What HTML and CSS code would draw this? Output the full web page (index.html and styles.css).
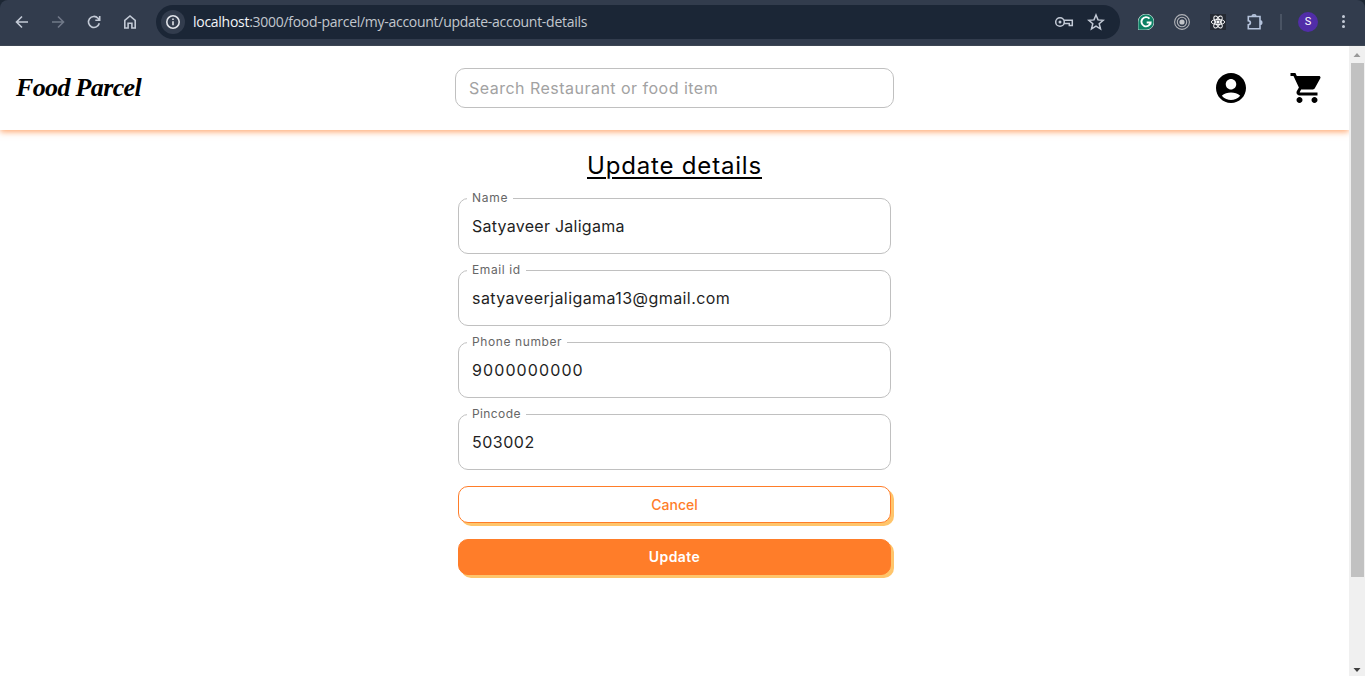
FILE: index.html
```html
<!DOCTYPE html>
<html lang="en">
<head>
<meta charset="utf-8">
<title>Food Parcel</title>
<link rel="stylesheet" href="styles.css">
</head>
<body>
<div class="browser">
  <div class="toolbar">
    <nav class="nav">
      <svg class="i16" viewBox="0 0 16 16"><path d="M14 8H3M8 2.5 2.5 8 8 13.500"/></svg>
      <svg class="i16 dim" viewBox="0 0 16 16"><path d="M2 8h11M8 2.500 13.500 8 8 13.500"/></svg>
      <svg class="i16" viewBox="0 0 16 16"><path d="M13.300 9.200A5.500 5.500 0 1 1 12 4.200L13.600 6M13.700 2v4.300H9.300"/></svg>
      <svg class="i16" viewBox="0 0 16 16"><path d="M2.800 6.300 8 2l5.200 4.300V14H9.900V9.300H6.100V14H2.800z"/></svg>
    </nav>
    <div class="address">
      <span class="info"><svg class="i16" viewBox="0 0 16 16"><circle cx="8" cy="8" r="6.200"/><path d="M8 7.300v4M8 4.500v1.500"/></svg></span>
      <span class="url"><b>localhost</b>:3000/food-parcel/my-account/update-account-details</span>
      <svg class="key" viewBox="0 0 20 14"><circle cx="6" cy="7" r="4.300"/><circle cx="6" cy="7" r="1.500" fill="#c3cad6" stroke="none"/><path d="M10 5.300h8.300v5.200h-3V8.600H10"/></svg>
      <svg class="star" viewBox="0 0 18 18"><path d="m9 2 2 4.900 5.200.400-4 3.400 1.300 5.100L9 13.100l-4.500 2.700 1.300-5.100-4-3.400L7 6.900z"/></svg>
    </div>
    <div class="extensions">
      <svg class="i16" viewBox="0 0 16 16"><path d="M0 16V8a8 8 0 1 1 8 8z" fill="#0c8064" stroke="#dce8e5" stroke-width=".7"/><path d="M11.500 4.700A4.600 4.600 0 1 0 12.600 8.500H8.700M12.500 8.500v2" stroke="#fff" stroke-width="1.900"/></svg>
      <svg class="i16 gray" viewBox="0 0 16 16"><circle cx="8" cy="8" r="7.400"/><circle cx="8" cy="8" r="4.700"/><circle cx="8" cy="8" r="2.600" fill="#c3c5c9" stroke="none"/></svg>
      <svg class="i16 react" viewBox="0 0 16 16"><rect width="16" height="16" fill="#252a33" stroke="none"/><ellipse cx="8" cy="8" rx="6.700" ry="2.600"/><ellipse cx="8" cy="8" rx="6.700" ry="2.600" transform="rotate(60 8 8)"/><ellipse cx="8" cy="8" rx="6.700" ry="2.600" transform="rotate(120 8 8)"/><circle cx="8" cy="8" r="1.200" fill="#fff"/></svg>
      <svg class="puzzle" viewBox="0 0 18 18"><path d="M2.300 3.500h11.700v12.200H2.300v-3.900c2.800-.300 2.800-3.700 0-4zM6.300 3.300c0-2 3.600-2 3.600 0M14 7.800c2.300 0 2.300 3.600 0 3.600"/></svg>
    </div>
    <span class="divider"></span>
    <span class="avatar">S</span>
    <span class="dots"><i></i><i></i><i></i></span>
  </div>
</div>
<div class="viewport">
  <div class="page">
    <header class="header">
      <div class="logo">Food Parcel</div>
      <div class="search">Search Restaurant or food item</div>
      <div class="actions">
        <svg class="action" viewBox="0 0 24 24"><path d="M12 2C6.480 2 2 6.480 2 12s4.480 10 10 10 10-4.480 10-10S17.520 2 12 2zm0 4c1.930 0 3.500 1.570 3.500 3.500S13.930 13 12 13s-3.500-1.570-3.500-3.500S10.070 6 12 6zm0 14c-2.030 0-4.430-.820-6.140-2.880C7.550 15.800 9.680 15 12 15s4.450.800 6.140 2.120C16.430 19.180 14.030 20 12 20z"/></svg>
        <svg class="action" viewBox="0 0 24 24"><path d="M7 18c-1.100 0-1.990.900-1.990 2S5.900 22 7 22s2-.900 2-2-.900-2-2-2zM1 2v2h2l3.600 7.590-1.350 2.450c-.160.280-.250.610-.250.960 0 1.100.900 2 2 2h12v-2H7.420c-.140 0-.250-.110-.250-.250l.030-.120.900-1.630h7.450c.750 0 1.410-.410 1.750-1.030l3.580-6.490c.080-.140.120-.310.120-.480 0-.550-.450-1-1-1H5.210l-.940-2H1zm16 16c-1.100 0-1.990.900-1.990 2s.890 2 1.990 2 2-.900 2-2-.900-2-2-2z"/></svg>
      </div>
    </header>
    <main class="form">
      <h1 class="title">Update details</h1>
      <fieldset class="field"><legend class="l-name">Name</legend><div class="value v-name">Satyaveer Jaligama</div></fieldset>
      <fieldset class="field"><legend class="l-email">Email id</legend><div class="value v-email">satyaveerjaligama13@gmail.com</div></fieldset>
      <fieldset class="field"><legend class="l-phone">Phone number</legend><div class="value v-phone">9000000000</div></fieldset>
      <fieldset class="field"><legend class="l-pin">Pincode</legend><div class="value v-pin">503002</div></fieldset>
      <button class="button outlined">Cancel</button>
      <button class="button filled">Update</button>
    </main>
  </div>
  <div class="scrollbar">
    <svg class="arrow up" viewBox="0 0 16 17"><path d="M4.500 11 8 7l3.500 4z"/></svg>
    <span class="thumb"></span>
    <svg class="arrow down" viewBox="0 0 16 17"><path d="M4.500 9 8 13l3.500-4z"/></svg>
  </div>
</div>
</body>
</html>
```
FILE: styles.css
```css
* { box-sizing: border-box; }
body { margin: 0; width: 1365px; height: 676px; overflow: hidden; display: flex; flex-direction: column; background: #fff; font-family: Inter, sans-serif; }
svg { display: block; flex: none; fill: none; }

.browser { height: 46px; flex: none; background: #1d2734; }
.toolbar { height: 46px; display: flex; align-items: center; padding: 0 13px 2px 14px; background: #323c4d; border-bottom: 1px solid #3d4653; border-radius: 8px 8px 0 0; }
.i16 { width: 16px; height: 16px; stroke: #c3cad6; stroke-width: 1.6; }
.nav { display: flex; gap: 20px; }
.nav .dim { stroke: #707988; }
.address { width: 964px; height: 34px; margin-left: 18px; padding: 0 15px 0 5px; display: flex; align-items: center; flex: none; border-radius: 17px; background: #1b2636; }
.info { width: 24px; height: 24px; display: grid; place-items: center; border-radius: 50%; background: #323c4d; }
.info svg { stroke: #e1e4ea; }
.url { flex: 1; margin-left: 8px; font: 14px/20px "Open Sans", sans-serif; letter-spacing: -.28px; color: #c2c7ce; white-space: nowrap; }
.url b { font-weight: 400; color: #f2f4f7; }
.key { width: 20px; height: 14px; stroke: #c3cad6; stroke-width: 1.5; margin-right: 13px; }
.star { width: 18px; height: 18px; stroke: #c3cad6; stroke-width: 1.5; }
.extensions { display: flex; align-items: center; gap: 20px; margin-left: 18px; }
.gray { stroke: #b1b3b8; stroke-width: 1.1; }
.react { stroke: #fff; stroke-width: .9; }
.puzzle { width: 18px; height: 18px; stroke: #b5c3dc; stroke-width: 1.6; }
.divider { width: 2px; height: 16px; margin-left: 16px; background: #4a5464; }
.avatar { width: 20px; height: 20px; margin-left: 16px; border-radius: 50%; background: #512da8; color: #fff; font: 11px/20px Roboto, sans-serif; text-align: center; }
.dots { display: flex; flex-direction: column; gap: 2px; margin-left: 24px; }
.dots i { width: 3px; height: 3px; border-radius: 50%; background: #c3cad6; }

.viewport { flex: 1; display: flex; min-height: 0; }
.page { width: 1349px; flex: none; }
.header { height: 84px; display: grid; grid-template-columns: 455px 439px 1fr; align-items: center; box-shadow: 0 2px 6px rgba(255, 125, 41, .65); clip-path: inset(0 0 -12px 0); }
.logo { padding-left: 16px; font: italic 700 26px/40px "Liberation Serif", serif; letter-spacing: -.65px; color: #000; white-space: nowrap; }
.search { height: 40px; padding: 0 13px; border: 1px solid #c0c0c0; border-radius: 10px; font-size: 16px; line-height: 39px; letter-spacing: .48px; color: #a2a2a2; white-space: nowrap; }
.actions { display: flex; gap: 40px; justify-content: flex-end; padding-right: 24px; }
.action { width: 36px; height: 36px; fill: #000; }

.form { width: 433px; margin: 20px auto 0; display: flex; flex-direction: column; }
.title { margin: 0 0 8px; font-size: 24px; font-weight: 400; line-height: 32px; letter-spacing: .82px; text-align: center; text-decoration: underline; text-decoration-thickness: 2px; text-underline-offset: 3px; color: #000; }
.field { height: 64px; min-width: 0; margin: 0 0 8px; padding: 0 13px 0 8px; border: 1px solid #c0c0c0; border-radius: 10px; }
.field legend { height: 16px; padding: 0 5px; font-size: 12px; line-height: 16px; color: #666; white-space: nowrap; }
.l-name { letter-spacing: .75px; }
.l-email { letter-spacing: .6px; }
.l-phone { letter-spacing: .6px; }
.l-pin { letter-spacing: .4px; }
.value { padding-left: 5px; font-size: 16px; line-height: 24px; margin-top: 8px; color: #1f1f1f; white-space: nowrap; }
.v-name { letter-spacing: .26px; }
.v-email { letter-spacing: .43px; }
.v-phone { letter-spacing: 1.1px; }
.v-pin { letter-spacing: .5px; }
.button { padding: 0; border: 1px solid #ff7d29; border-radius: 10px; box-shadow: 3px 3px 0 #ffc56b; font: 500 14px/34px Inter, sans-serif; }
.outlined { height: 37px; margin: 8px 0 16px; background: #fff; color: #ff7d29; }
.filled { height: 36px; background: #ff7d29; color: #fff; font-weight: 600; letter-spacing: .4px; }

.scrollbar { width: 16px; display: flex; flex-direction: column; background: #f0f0f0; }
.arrow { width: 16px; height: 17px; }
.up { fill: #999; }
.down { margin-top: auto; fill: #404040; }
.thumb { width: 13px; height: 514px; margin-left: 2px; background: #c1c1c1; }
```
